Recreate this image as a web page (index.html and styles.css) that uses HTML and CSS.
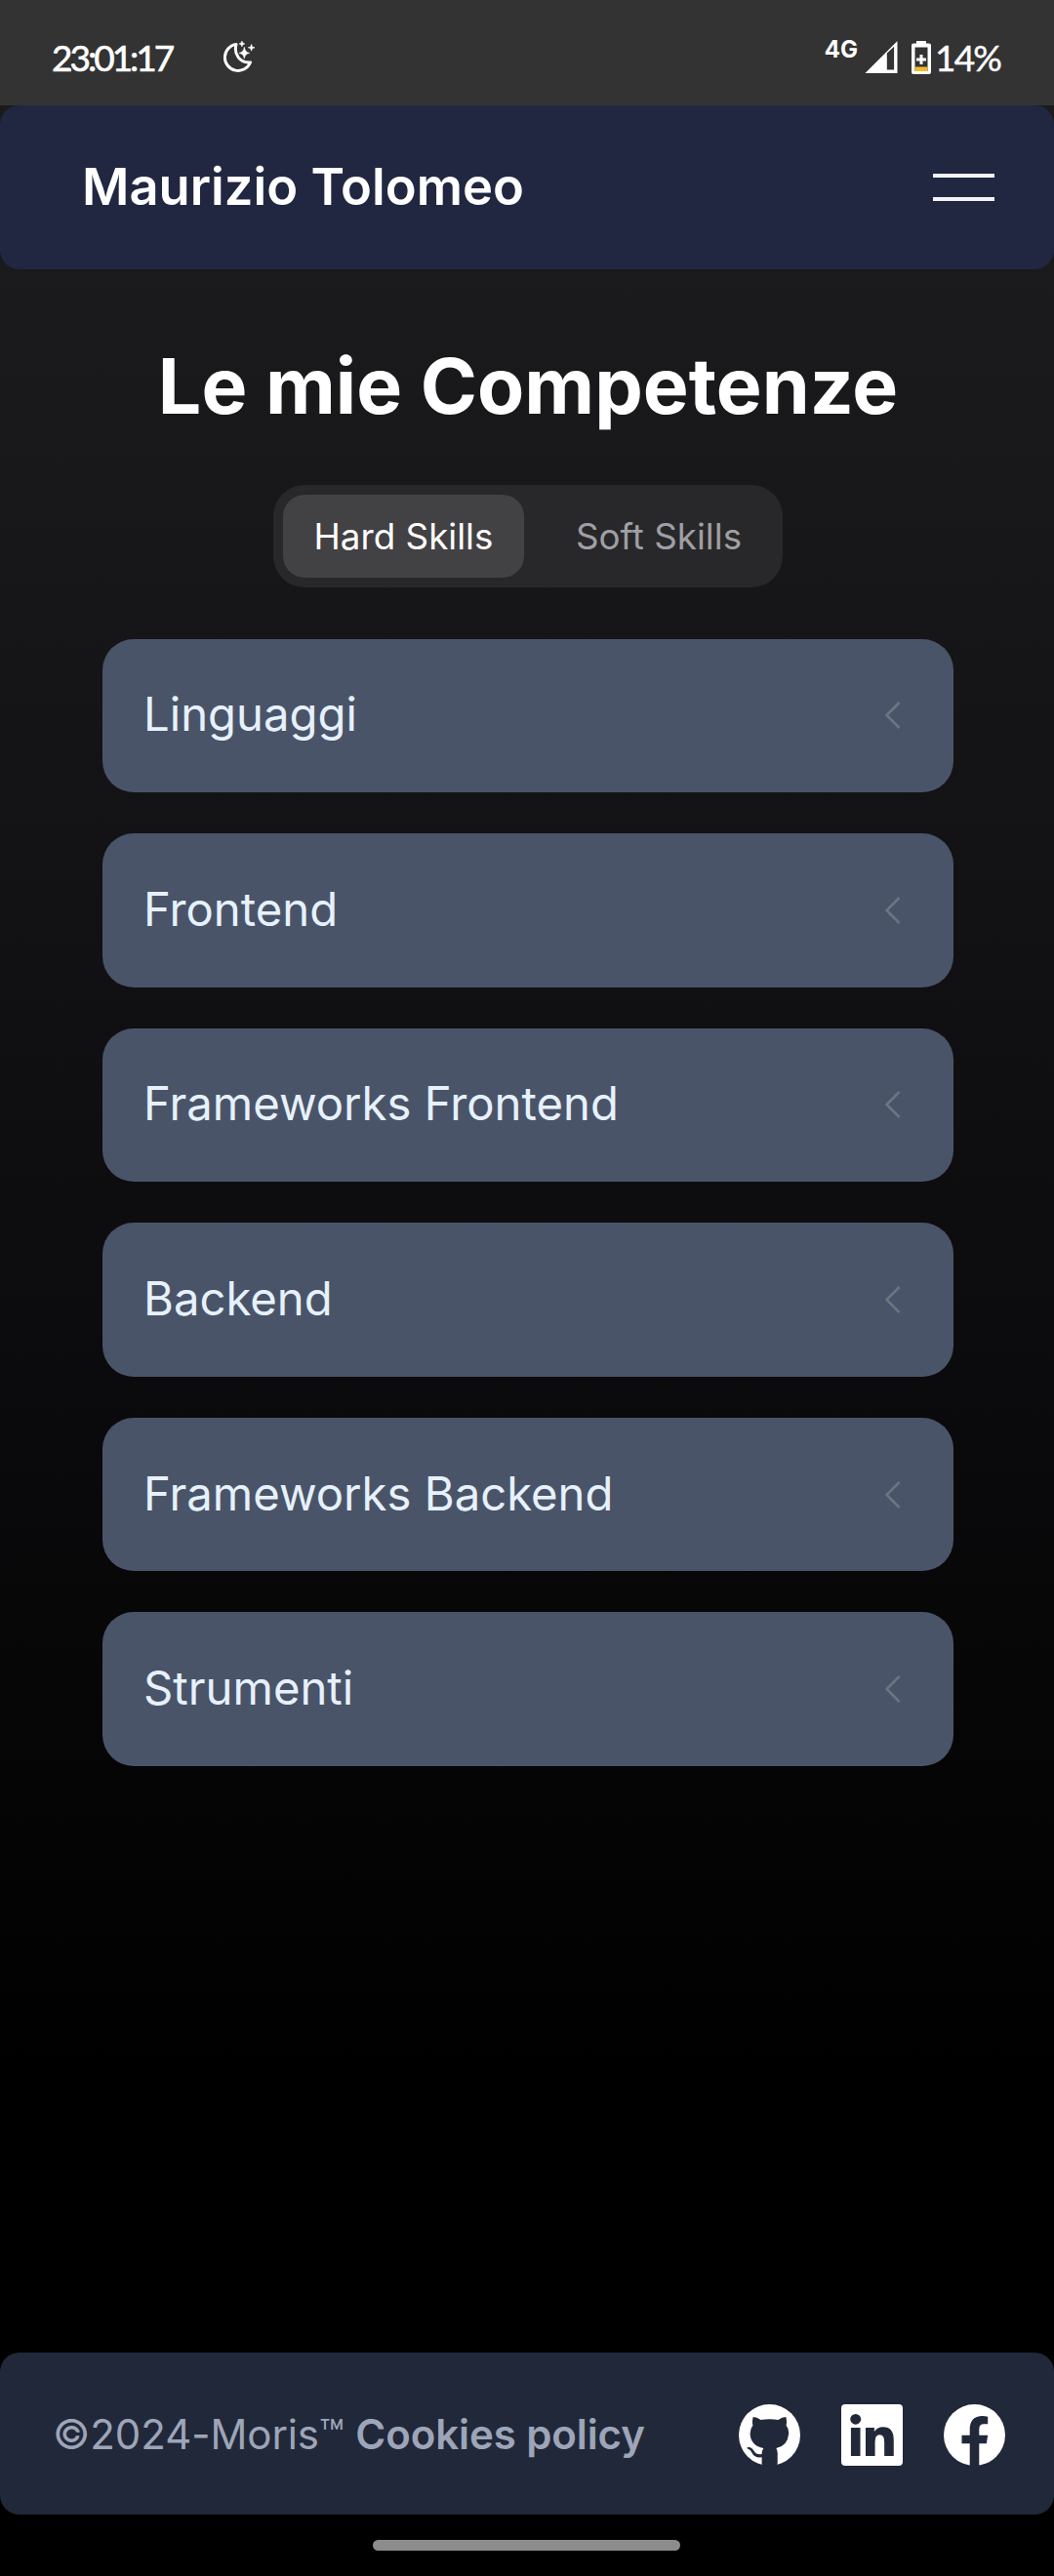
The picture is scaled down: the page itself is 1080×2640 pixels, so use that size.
FILE: index.html
```html
<!DOCTYPE html>
<html lang="it">
<head>
<meta charset="utf-8">
<title>Maurizio Tolomeo</title>
<link rel="stylesheet" href="styles.css">
</head>
<body>
<div class="status">
  <span class="clock">23:01:17</span>
  <svg class="moon" viewBox="0 0 34 34"><path d="M14 3.500A14 14 0 1 0 29 22.500C18 24 11 14 14 3.500Z" fill="none" stroke="#fff" stroke-width="3" stroke-linejoin="round"/><path d="M22.500 6.500Q23.300 12 28 12.700Q23.300 13.500 22.500 18.500Q21.700 13.500 17 12.700Q21.700 12 22.500 6.500ZM20 0l.9 2.100 2.100.9-2.100.9L20 6l-.9-2.100L17 3l2.100-.9ZM30 3.500l.9 2.600 2.600.9-2.600.9L30 10.500l-.9-2.600-2.600-.9 2.600-.9Z" fill="#fff" stroke="#fff" stroke-width=".6"/></svg>
  <span class="network">4G</span>
  <svg class="signal" viewBox="0 0 34 34"><path fill-rule="evenodd" d="M34 0V34H0ZM23 13V30.500H30.500V6Z" fill="#fff"/></svg>
  <svg class="battery" viewBox="0 0 20 34"><path fill-rule="evenodd" d="M5 0H15V2.500H18Q20 2.500 20 4.500V32Q20 34 18 34H2Q0 34 0 32V4.500Q0 2.500 2 2.500H5ZM3.500 6.500V31H16.500V6.500Z" fill="#fff"/><path d="M8.500 14h3v3.500H15v3h-3.500V24h-3v-3.500H5v-3h3.500Z" fill="#fff"/><path d="M3.500 26.500h13V31h-13Z" fill="#efbb2e"/></svg>
  <span class="percent">14%</span>
</div>
<header class="nav">
  <span class="brand">Maurizio Tolomeo</span>
  <div class="burger"><i></i><i></i></div>
</header>
<main class="main">
  <h1 class="title">Le mie Competenze</h1>
  <div class="tabs"><span class="tab tab-active">Hard Skills</span><span class="tab">Soft Skills</span></div>
  <section class="cards">
    <div class="card"><span>Linguaggi</span><svg class="chevron" viewBox="0 0 16 28"><path d="M14.500 1 1.500 14 14.500 27"/></svg></div>
    <div class="card"><span>Frontend</span><svg class="chevron" viewBox="0 0 16 28"><path d="M14.500 1 1.500 14 14.500 27"/></svg></div>
    <div class="card"><span>Frameworks Frontend</span><svg class="chevron" viewBox="0 0 16 28"><path d="M14.500 1 1.500 14 14.500 27"/></svg></div>
    <div class="card"><span>Backend</span><svg class="chevron" viewBox="0 0 16 28"><path d="M14.500 1 1.500 14 14.500 27"/></svg></div>
    <div class="card"><span>Frameworks Backend</span><svg class="chevron" viewBox="0 0 16 28"><path d="M14.500 1 1.500 14 14.500 27"/></svg></div>
    <div class="card"><span>Strumenti</span><svg class="chevron" viewBox="0 0 16 28"><path d="M14.500 1 1.500 14 14.500 27"/></svg></div>
  </section>
</main>
<footer class="footer">
  <p class="legal">©2024-Moris™ <b>Cookies policy</b></p>
  <div class="social">
    <svg viewBox="0 0 184 189" preserveAspectRatio="none"><ellipse cx="92" cy="94.500" rx="92" ry="94.500" fill="#fff"/><path fill="#212839" d="M43 39Q54 39 66 48Q92 43 118 48Q130 39 141 39Q145 52 142 65Q151 76 149 93Q146 128 112 135Q116 142 116 150V181Q116 184 113 190H71Q69 187 69 182V163Q47 166 40 150Q36 140 25 136Q23 131 33 132Q41 135 46 144Q53 157 69 153Q69 142 74 135Q37 128 34 93Q33 76 42 65Q39 52 43 39Z"/></svg>
    <svg viewBox="0 0 184 189" preserveAspectRatio="none"><rect width="184" height="189" rx="12" fill="#fff"/><g fill="#212839"><circle cx="43" cy="46" r="16"/><path d="M29 72H57V159H29ZM73 72H99V84Q108 70 125 70Q157 70 157 110V159H129V116Q129 94 115 94Q101 94 101 116V159H73Z"/></g></svg>
    <svg viewBox="0 0 184 189" preserveAspectRatio="none"><ellipse cx="92" cy="94.500" rx="92" ry="94.500" fill="#fff"/><path fill="#212839" d="M78 189V121H54V95H78V78Q78 36 116 36Q124 36 132 38V61H120Q106 61 106 77V95H132L128 121H106V189Z"/></svg>
  </div>
</footer>
<div class="home"></div>
</body>
</html>
```
FILE: styles.css
```css
* { box-sizing: border-box; }
body { margin: 0; width: 1080px; height: 2640px; display: flex; flex-direction: column; font-family: Inter, "Liberation Sans", sans-serif; color: #fff; background: linear-gradient(#1c1b1c 110px, #18171a 500px, #0b0b0d 1400px, #000 2150px); }
svg { display: block; flex: none; }
.status { height: 108px; flex: none; background: #333; display: flex; align-items: center; padding: 9px 54px 0 53px; font-family: Lato, sans-serif; font-size: 37px; }
.clock { width: 175px; letter-spacing: -3px; white-space: nowrap; -webkit-text-stroke: .6px #fff; }
.moon { width: 34px; height: 33px; }
.network { margin-left: auto; font: 700 24px/24px Inter, sans-serif; padding-bottom: 15px; }
.signal { width: 34px; height: 33px; margin-left: 7px; }
.battery { width: 20px; height: 34px; margin-left: 14px; }
.percent { margin-left: 4px; width: 68px; letter-spacing: -1.8px; white-space: nowrap; -webkit-text-stroke: .4px #fff; }
.nav { height: 168px; flex: none; border-radius: 20px; background: #212740; display: flex; align-items: center; justify-content: space-between; padding: 0 61px 0 84px; }
.brand { font-size: 52.500px; font-weight: 600; padding-bottom: 2px; }
.burger { width: 63px; display: flex; flex-direction: column; gap: 20px; }
.burger i { height: 4px; background: #f3f4fa; }
.main { flex: 1; padding: 73px 103px 0 105px; display: flex; flex-direction: column; align-items: center; }
.title { margin: 0; font-size: 78.750px; line-height: 94px; font-weight: 700; white-space: nowrap; }
.tabs { margin-top: 54px; width: 522px; height: 105px; padding: 10px; border-radius: 32px; background: #28272a; display: flex; gap: 21px; }
.tab { flex: 1; display: flex; align-items: center; justify-content: center; font-size: 36.750px; color: #a09fa3; }
.tab-active { flex: none; width: 247px; border-radius: 22px; background: #424144; color: #fff; }
.cards { width: 872px; margin-top: 52.500px; display: flex; flex-direction: column; gap: 42.100px; }
.card { height: 157.500px; border-radius: 32px; background: #4a5469; display: flex; align-items: center; justify-content: space-between; padding: 0 54px 0 42px; font-size: 47.250px; color: #e6f1fc; }
.card span { padding-bottom: 3px; }
.chevron { width: 16px; height: 28px; fill: none; stroke: #6a7680; stroke-width: 2.500; }
.footer { height: 166px; flex: none; border-radius: 20px; background: #212839; display: flex; align-items: center; justify-content: space-between; padding: 0 50px 0 54px; }
.legal { margin: 0; font-size: 42px; letter-spacing: -.08px; color: #9da5b8; white-space: nowrap; }
.legal b { font-weight: 600; }
.social { display: flex; gap: 42px; padding-top: 2px; }
.social svg { width: 63px; height: 63px; }
.home { flex: none; width: 315px; height: 11px; border-radius: 6px; background: #8e8b8e; margin: 26px auto 26px 382px; }
```
